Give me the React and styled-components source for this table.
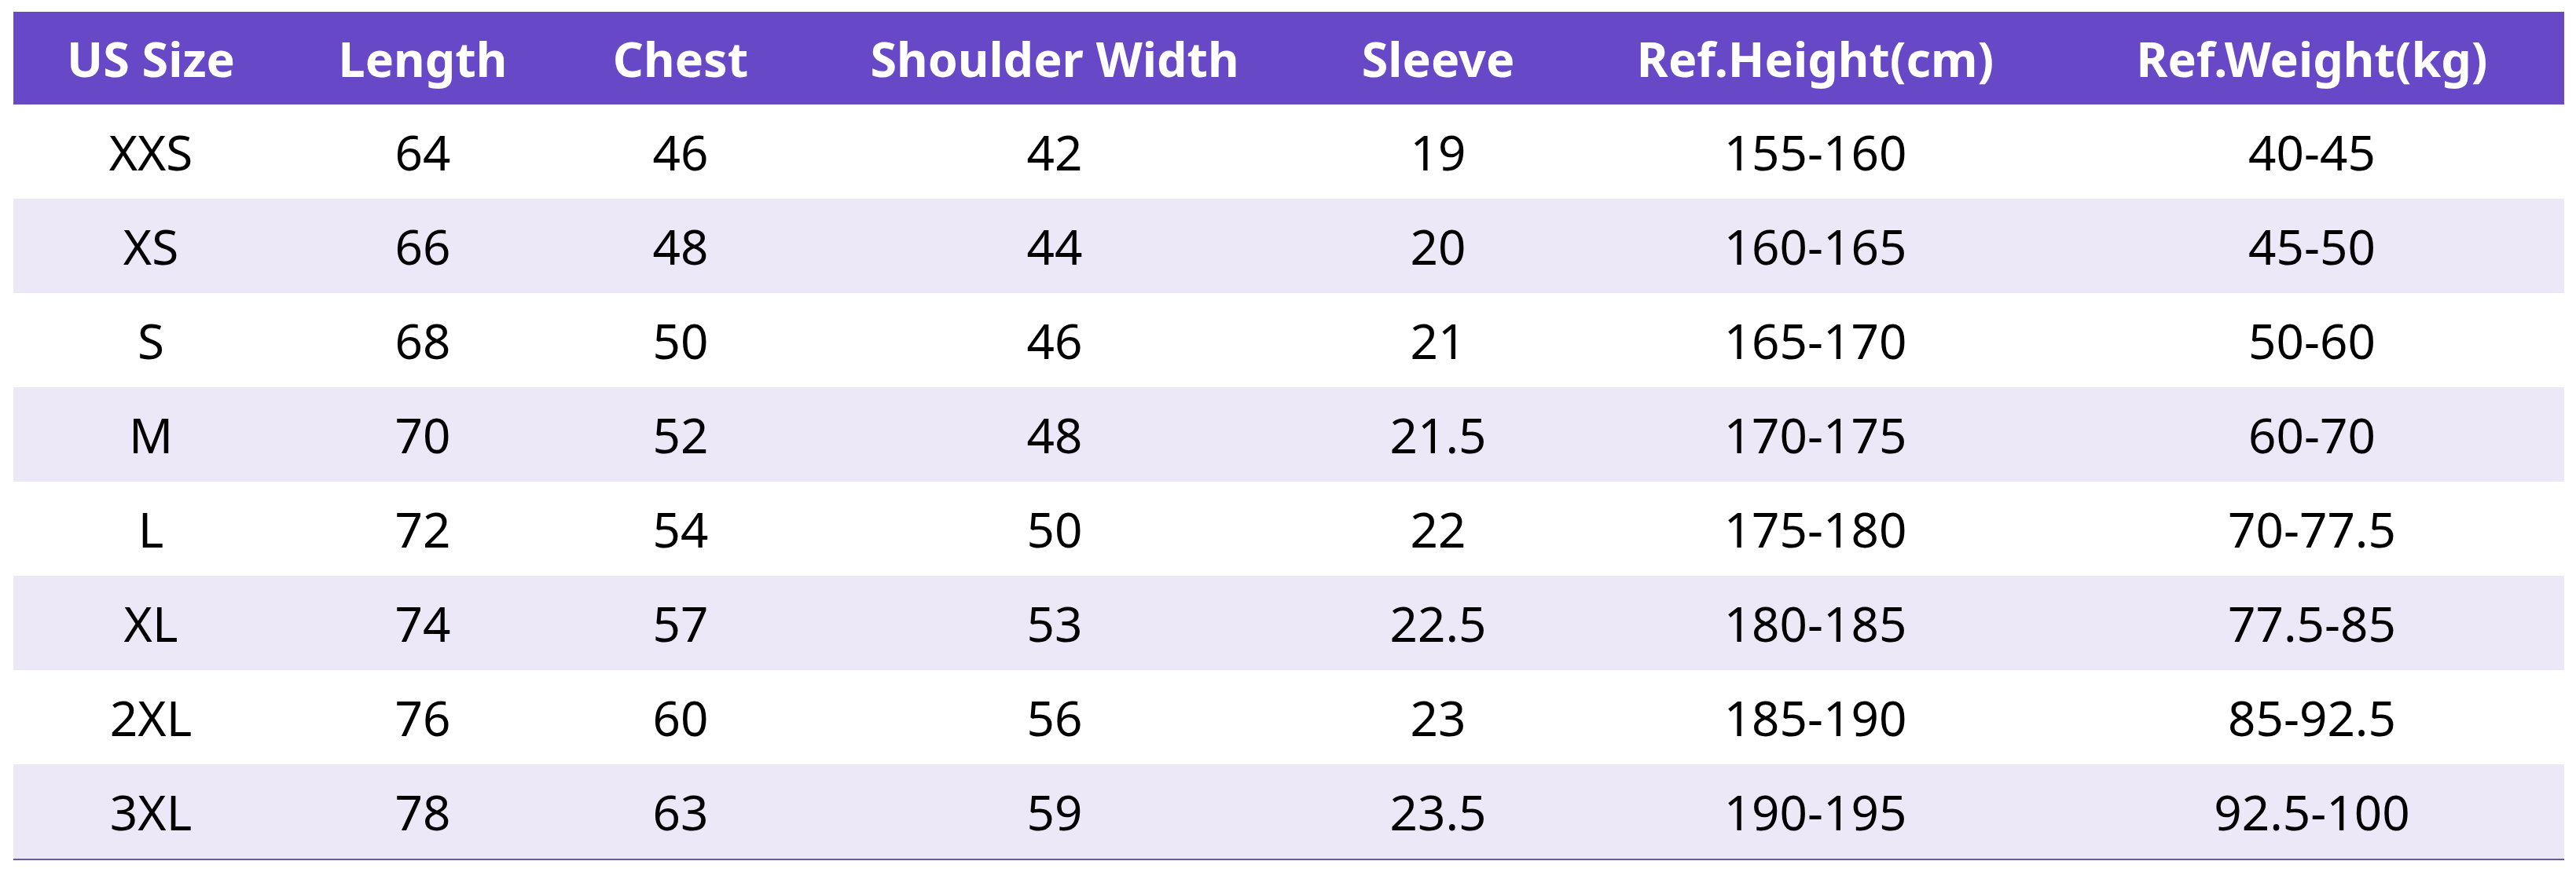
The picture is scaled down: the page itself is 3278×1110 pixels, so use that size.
import React from 'react';
import styled, { createGlobalStyle } from 'styled-components';

const GlobalStyle = createGlobalStyle`
  html, body {
    margin: 0;
    padding: 0;
    background: #ffffff;
  }
`;

const Page = styled.div`
  padding: 15px 15px 0 17px;
  font-family: 'Noto Sans', 'Open Sans', sans-serif;
`;

const Table = styled.table`
  width: 3246px;
  table-layout: fixed;
  border-collapse: collapse;
  border-bottom: 2px solid #6a5a9e;
`;

const HeadCell = styled.th`
  height: 118px;
  padding: 0;
  background: #6749c7;
  color: #ffffff;
  font-size: 61px;
  font-weight: 700;
  text-align: center;
  vertical-align: middle;
  white-space: nowrap;
`;

const Row = styled.tr`
  background: ${props => (props.striped ? '#ece8f8' : '#ffffff')};
`;

const Cell = styled.td`
  height: 120px;
  padding: 0;
  color: #000000;
  font-size: 62px;
  font-weight: 400;
  text-align: center;
  vertical-align: middle;
  white-space: nowrap;
`;

const columns = [
  { label: 'US Size', width: 350 },
  { label: 'Length', width: 342 },
  { label: 'Chest', width: 314 },
  { label: 'Shoulder Width', width: 638 },
  { label: 'Sleeve', width: 338 },
  { label: 'Ref.Height(cm)', width: 622 },
  { label: 'Ref.Weight(kg)', width: 642 },
];

const rows = [
  ['XXS', '64', '46', '42', '19', '155-160', '40-45'],
  ['XS', '66', '48', '44', '20', '160-165', '45-50'],
  ['S', '68', '50', '46', '21', '165-170', '50-60'],
  ['M', '70', '52', '48', '21.5', '170-175', '60-70'],
  ['L', '72', '54', '50', '22', '175-180', '70-77.5'],
  ['XL', '74', '57', '53', '22.5', '180-185', '77.5-85'],
  ['2XL', '76', '60', '56', '23', '185-190', '85-92.5'],
  ['3XL', '78', '63', '59', '23.5', '190-195', '92.5-100'],
];

const App = () => (
  <Page>
    <GlobalStyle />
    <Table>
      <colgroup>
        {columns.map(col => (
          <col key={col.label} style={{ width: col.width }} />
        ))}
      </colgroup>
      <thead>
        <tr>
          {columns.map(col => (
            <HeadCell key={col.label}>{col.label}</HeadCell>
          ))}
        </tr>
      </thead>
      <tbody>
        {rows.map((row, i) => (
          <Row key={row[0]} striped={i % 2 === 1}>
            {row.map((value, j) => (
              <Cell key={j}>{value}</Cell>
            ))}
          </Row>
        ))}
      </tbody>
    </Table>
  </Page>
);

export default App;
